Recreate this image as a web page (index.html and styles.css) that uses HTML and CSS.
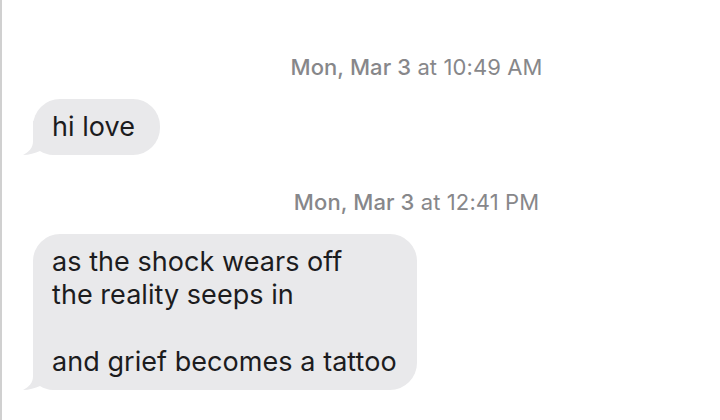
FILE: index.html
```html
<!DOCTYPE html>
<html>
<head>
<meta charset="utf-8">
<link rel="stylesheet" href="styles.css">
</head>
<body>
<div class="thread">
  <div class="stamp stamp-first"><span class="date">Mon, Mar 3</span> at 10:49 AM</div>
  <div class="row">
    <div class="bubble bubble-short">hi love<svg class="tail" width="40" height="34" viewBox="0 0 40 34"><path d="M10 0 L10 20 C10 27 6 31 0 34 C6 34 12 32 17 30 C21 32.5 25 33.8 30 34 L40 34 L40 0 Z"/></svg></div>
  </div>
  <div class="stamp stamp-second"><span class="date">Mon, Mar 3</span> at 12:41 PM</div>
  <div class="row">
    <div class="bubble">as the shock wears off<br>the reality seeps in<br><br>and grief becomes a tattoo<svg class="tail" width="40" height="34" viewBox="0 0 40 34"><path d="M10 0 L10 20 C10 27 6 31 0 34 C6 34 12 32 17 30 C21 32.5 25 33.8 30 34 L40 34 L40 0 Z"/></svg></div>
  </div>
</div>
</body>
</html>
```

FILE: styles.css
```css
html, body {
  margin: 0;
  padding: 0;
  background: #ffffff;
}
body {
  width: 720px;
  height: 420px;
  overflow: hidden;
  box-sizing: border-box;
  border-left: 2px solid #d0d0d0;
  font-family: "Inter", "Liberation Sans", sans-serif;
}
.thread {
  display: flex;
  flex-direction: column;
  align-items: flex-start;
  padding: 54px 0 0 31px;
}
.stamp {
  align-self: stretch;
  text-align: center;
  padding-left: 80px;
  font-size: 22px;
  line-height: 26px;
  letter-spacing: 0.1px;
  color: #87878a;
  font-weight: 400;
}
.stamp .date {
  font-weight: 500;
}
.stamp-first {
  margin-bottom: 19px;
}
.stamp-second {
  margin-top: 34px;
  margin-bottom: 19px;
}
.row {
  display: flex;
}
.bubble {
  position: relative;
  isolation: isolate;
  background: #e9e9eb;
  color: #1c1c1e;
  border-radius: 27px;
  padding: 11px 20px 11px 19px;
  font-size: 27px;
  line-height: 33.5px;
  letter-spacing: 0.05px;
}
.bubble-short {
  padding-right: 25px;
}
.tail {
  position: absolute;
  z-index: -1;
  left: -10px;
  bottom: 0;
  fill: #e9e9eb;
}
```
